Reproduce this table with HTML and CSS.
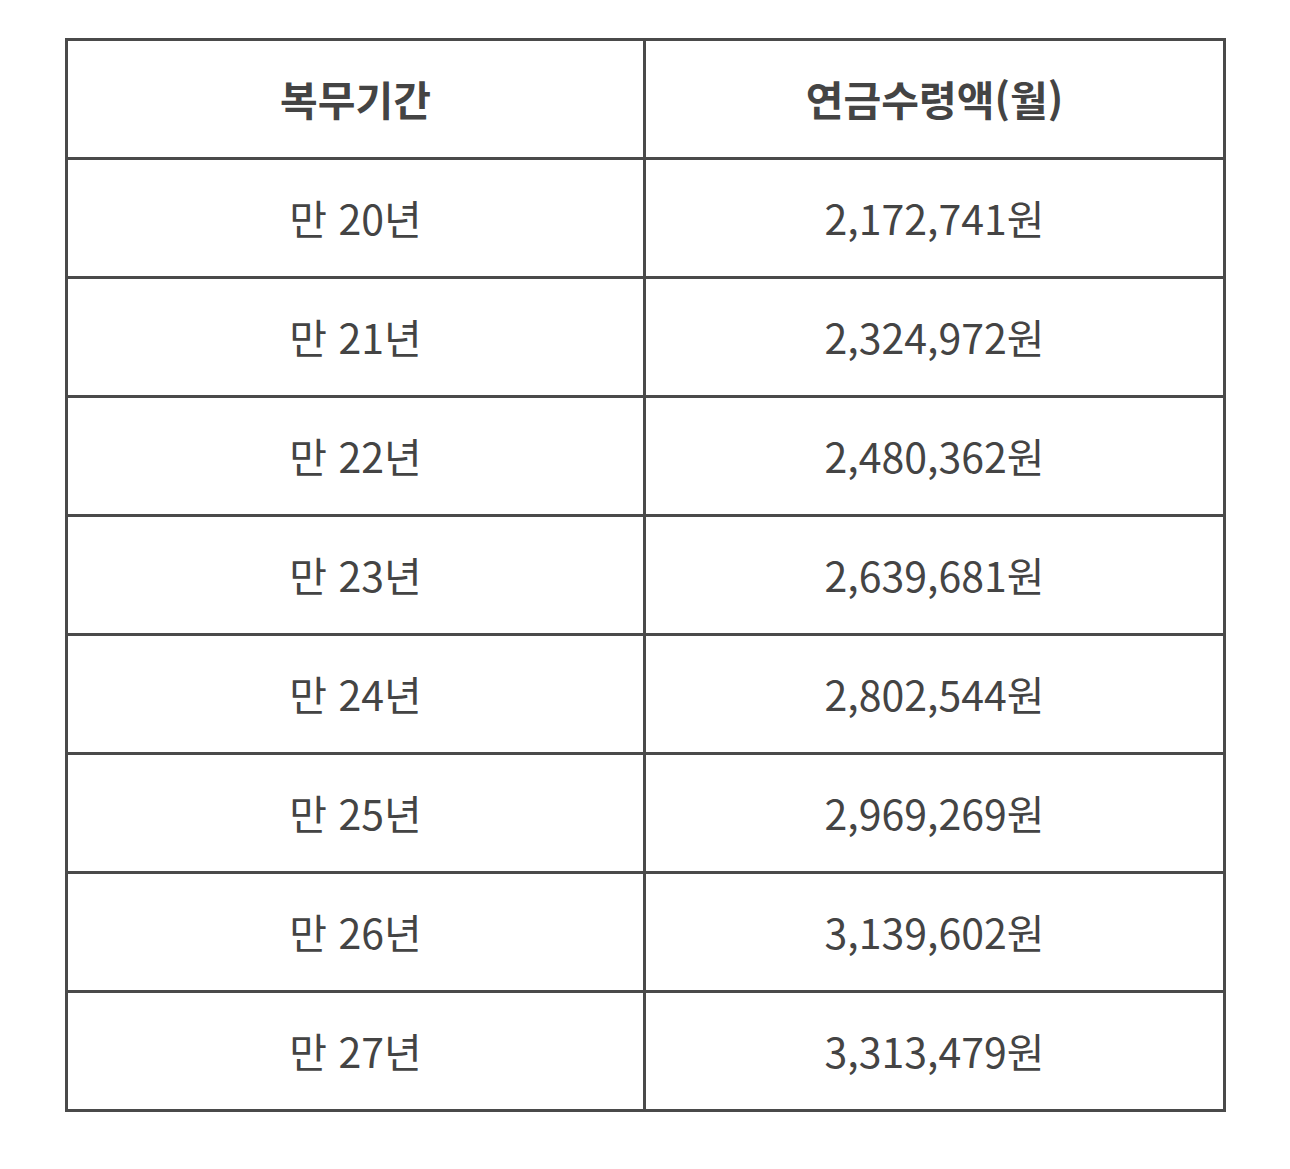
FILE: index.html
```html
<!DOCTYPE html>
<html lang="ko">
<head>
<meta charset="utf-8">
<link rel="stylesheet" href="styles.css">
</head>
<body>
<table class="pension">
  <thead>
    <tr><th class="col-left">복무기간</th><th class="col-right">연금수령액(월)</th></tr>
  </thead>
  <tbody>
    <tr><td class="col-left">만 20년</td><td class="col-right">2,172,741원</td></tr>
    <tr><td class="col-left">만 21년</td><td class="col-right">2,324,972원</td></tr>
    <tr><td class="col-left">만 22년</td><td class="col-right">2,480,362원</td></tr>
    <tr><td class="col-left">만 23년</td><td class="col-right">2,639,681원</td></tr>
    <tr><td class="col-left">만 24년</td><td class="col-right">2,802,544원</td></tr>
    <tr><td class="col-left">만 25년</td><td class="col-right">2,969,269원</td></tr>
    <tr><td class="col-left">만 26년</td><td class="col-right">3,139,602원</td></tr>
    <tr><td class="col-left">만 27년</td><td class="col-right">3,313,479원</td></tr>
  </tbody>
</table>
</body>
</html>
```
FILE: styles.css
```css
html, body {
  margin: 0;
  padding: 0;
  background: #ffffff;
}
body {
  font-family: "Noto Sans CJK KR", "Noto Sans", sans-serif;
  color: #444444;
}
.pension {
  margin: 38px 0 0 65px;
  border-collapse: separate;
  border-spacing: 0;
  border-top: 3px solid #4a4a4a;
  border-left: 3px solid #4a4a4a;
  table-layout: fixed;
  width: 1161px;
}
.pension th,
.pension td {
  height: 116px;
  padding: 0;
  text-align: center;
  vertical-align: middle;
  font-size: 41px;
  line-height: 1.2;
  border-right: 3px solid #4a4a4a;
  border-bottom: 3px solid #4a4a4a;
  box-sizing: content-box;
}
.pension th {
  font-weight: 700;
  color: #444444;
}
.pension td {
  font-weight: 400;
}
.col-left {
  width: 575px;
}
.col-right {
  width: 577px;
}
```
